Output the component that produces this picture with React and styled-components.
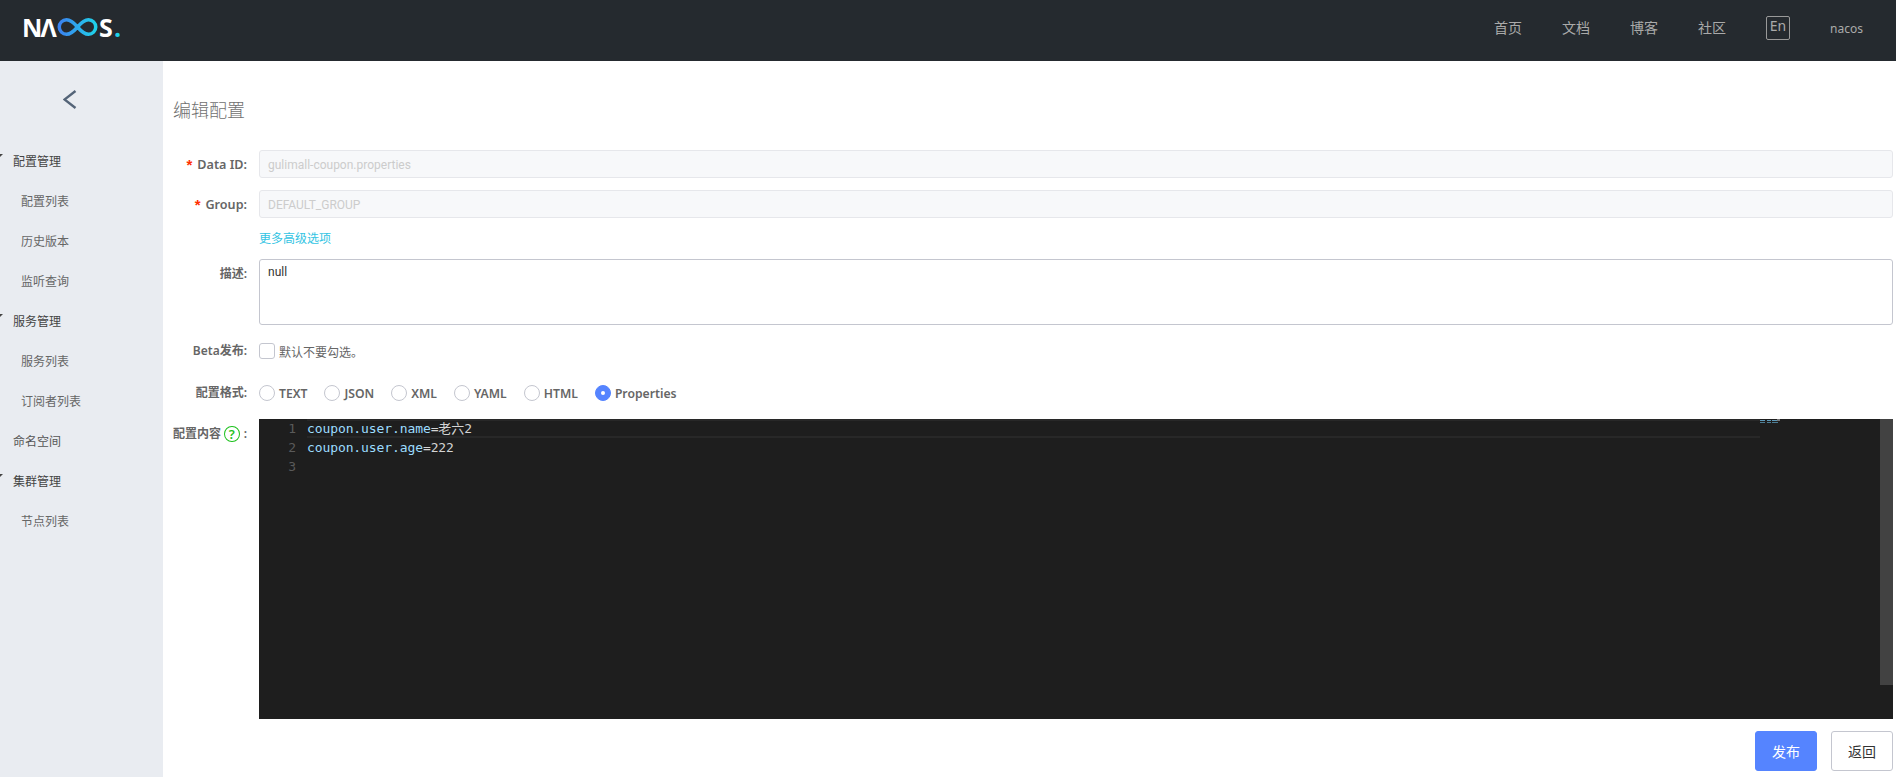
import React from 'react';
import styled, { createGlobalStyle } from 'styled-components';

const Global = createGlobalStyle`
  html, body { margin: 0; padding: 0; background: #fff; }
  body { font-family: "Noto Sans", "Noto Sans CJK SC", sans-serif; font-size: 12px; color: #333; }
  * { box-sizing: border-box; }
`;

const Page = styled.div`
  width: 1896px; height: 777px; display: flex; flex-direction: column; overflow: hidden;
`;
const Header = styled.header`
  height: 61px; flex: none; background: #252a2f; display: flex; align-items: center;
  justify-content: space-between; padding: 0 33px 0 22px;
`;
const Logo = styled.div`
  display: flex; align-items: center; height: 18px; margin-top: -7px; color: #fff;
  font-family: "Open Sans", sans-serif; font-weight: 700; font-size: 25px; line-height: 18px;
`;
const LogoLetter = styled.span`
  display: block; width: ${p => p.$w}px; text-align: center; color: ${p => p.$c || '#fff'};
`;
const Nav = styled.nav`
  display: flex; align-items: center; gap: 40px; color: #aaa; font-size: 14px; margin-top: -5px;
`;
const NavLink = styled.a`
  color: #aaa; font-family: "Noto Sans CJK SC", sans-serif; margin-bottom: 2px;
`;
const LangBox = styled.span`
  width: 24px; height: 24px; border: 1px solid #999; border-radius: 2px; color: #aaa;
  display: flex; align-items: flex-start; justify-content: center; line-height: 18px; font-size: 14px;
`;
const UserName = styled.span`
  color: #aaa; font-size: 12px; width: 33px; white-space: nowrap;
`;
const Body = styled.div`
  flex: 1; display: flex; min-height: 0;
`;
const Sidebar = styled.aside`
  width: 163px; flex: none; background: #e9ecf1; overflow: hidden; padding-top: 29px;
`;
const Back = styled.div`
  display: flex; justify-content: center; width: 140px; height: 19px; margin-bottom: 31px;
`;
const Menu = styled.ul`
  list-style: none; margin: 0; padding: 0;
`;
const MenuItem = styled.li`
  height: 40px; display: flex; align-items: center; font-size: 12px;
  padding-left: ${p => (p.$sub ? 21 : 13)}px;
  color: ${p => (p.$sub ? '#666' : p.$group ? '#444' : '#555')};
  font-family: "Noto Sans CJK SC", sans-serif;
`;
const Caret = styled.i`
  display: block; width: 0; height: 0; margin: -8px 10px 0 -18px;
  border-left: 4px solid transparent; border-right: 4px solid transparent; border-top: 4px solid #444;
  flex: none;
`;
const Main = styled.main`
  flex: 1; min-width: 0; padding: 34px 3px 0 10px; background: #fff;
`;
const Title = styled.h1`
  margin: 0 0 27px; font-size: 18px; line-height: 28px; font-weight: 300; color: #707070;
  font-family: "Noto Sans CJK SC", sans-serif;
`;
const Row = styled.div`
  display: grid; grid-template-columns: 74px 1fr; column-gap: 12px; margin-bottom: ${p => p.$mb ?? 12}px;
  align-items: ${p => p.$center ? 'center' : 'start'};
`;
const Label = styled.label`
  display: flex; justify-content: flex-end; align-items: center; white-space: nowrap;
  height: ${p => p.$lh ?? 28}px; padding-top: ${p => (p.$lh ? 0 : 2)}px; line-height: 16px;
  font-size: 12px; font-weight: 600; color: #666;
  font-family: "Noto Sans", "Noto Sans CJK SC", sans-serif;
`;
const LatinText = styled.span`
  font-size: 12.6px;
`;
const Star = styled.span`
  color: #ff3000; margin-right: 5px; font-family: "Liberation Sans", sans-serif; font-size: 15px; line-height: 12px;
`;
const DisabledInput = styled.div`
  height: 28px; background: #f7f8fa; border: 1px solid #e6e7eb; border-radius: 3px; color: #ccc;
  padding: 0 8px; line-height: 28px; font-size: 12px; font-family: Roboto, sans-serif;
`;
const MoreLink = styled.a`
  display: block; color: #33c4e3; font-size: 12px; line-height: 20px;
  font-family: "Noto Sans CJK SC", sans-serif;
`;
const TextArea = styled.div`
  height: 66px; border: 1px solid #c4c6cf; border-radius: 3px; padding: 3px 8px; line-height: 18px;
  font-size: 12px; color: #333; font-family: Roboto, sans-serif;
`;
const CheckRow = styled.div`
  display: flex; align-items: center; height: 16px; gap: 4px; color: #666; font-size: 12px;
  font-family: "Noto Sans CJK SC", sans-serif;
`;
const CheckBox = styled.span`
  width: 16px; height: 16px; border: 1px solid #c4c6cf; border-radius: 3px; background: #fff; display: block;
`;
const RadioGroup = styled.div`
  display: flex; align-items: center; height: 16px; gap: 17px;
`;
const RadioItem = styled.span`
  display: flex; align-items: center; gap: 4px; font-weight: 600; font-size: 12.2px; color: #666;
`;
const Radio = styled.span`
  width: 16px; height: 16px; border-radius: 50%; flex: none; display: flex; align-items: center; justify-content: center;
  border: 1px solid ${p => (p.$on ? '#5584ff' : '#c4c6cf')};
  background: ${p => (p.$on ? '#5584ff' : '#fff')};
  &::after { content: ""; display: ${p => (p.$on ? 'block' : 'none')}; width: 4px; height: 4px; border-radius: 50%; background: #fff; }
`;
const Help = styled.span`
  width: 16px; height: 16px; border-radius: 50%; border: 1.5px solid #1dc11d; color: #1dc11d;
  display: inline-flex; align-items: center; justify-content: center; font-size: 13px; line-height: 1;
  font-weight: 600; margin: 0 4px 0 3px;
`;
const Editor = styled.div`
  height: 300px; background: #1e1e1e; display: flex; overflow: hidden;
  font-family: "DejaVu Sans Mono", "Noto Sans CJK SC", monospace; font-size: 13px; line-height: 19px;
  letter-spacing: -0.1px;
`;
const Gutter = styled.div`
  width: 48px; flex: none; text-align: right; padding-right: 11px; color: #5a5a5a;
`;
const LineNo = styled.div`
  height: 19px;
`;
const Code = styled.div`
  flex: 1; min-width: 0;
`;
const Line = styled.div`
  height: 19px; color: #d4d4d4; white-space: pre;
  ${p => p.$active && 'box-shadow: inset 0 2px 0 #282828, inset 0 -2px 0 #282828;'}
`;
const Key = styled.span`
  color: #9cdcfe;
`;
const Minimap = styled.div`
  width: 120px; flex: none; line-height: 0;
`;
const Scrollbar = styled.div`
  width: 13px; height: 266px; flex: none; background: #424242;
`;
const Actions = styled.div`
  display: flex; justify-content: flex-end; gap: 14px; margin-top: 12px;
`;
const Button = styled.button`
  width: 62px; height: 40px; border-radius: 3px; font-size: 14px; padding: 0;
  font-family: "Noto Sans CJK SC", sans-serif;
  background: ${p => (p.$primary ? '#5584ff' : '#fff')};
  color: ${p => (p.$primary ? '#fff' : '#333')};
  border: 1px solid ${p => (p.$primary ? '#5584ff' : '#c4c6cf')};
`;

const InfinityMark = () => (
  <svg width="41" height="18" viewBox="0 0 41 18" fill="none">
    <defs>
      <linearGradient id="inf" x1="0" x2="1" y1="0" y2="0">
        <stop offset="0" stopColor="#3b82f0" />
        <stop offset="1" stopColor="#1fd2ea" />
      </linearGradient>
    </defs>
    <path d="M20.5 9C16 3.700 13 1.750 9.500 1.750a7.250 7.250 0 0 0 0 14.500c3.500 0 6.500-1.950 11-7.250s7.500-7.250 11-7.250a7.250 7.250 0 0 1 0 14.500c-3.500 0-6.500-1.950-11-7.250Z"
      stroke="url(#inf)" strokeWidth="3.500" />
  </svg>
);

const menu = [
  { t: '配置管理', group: true }, { t: '配置列表', sub: true }, { t: '历史版本', sub: true }, { t: '监听查询', sub: true },
  { t: '服务管理', group: true }, { t: '服务列表', sub: true }, { t: '订阅者列表', sub: true },
  { t: '命名空间' }, { t: '集群管理', group: true }, { t: '节点列表', sub: true },
];
const formats = ['TEXT', 'JSON', 'XML', 'YAML', 'HTML', 'Properties'];

export default function App() {
  return (
    <Page>
      <Global />
      <Header>
        <Logo>
          <LogoLetter $w={18}>N</LogoLetter>
          <LogoLetter $w={17}>Λ</LogoLetter>
          <InfinityMark />
          <LogoLetter $w={16}>S</LogoLetter>
          <LogoLetter $w={5} $c="#1fd2ea">.</LogoLetter>
        </Logo>
        <Nav>
          <NavLink>首页</NavLink>
          <NavLink>文档</NavLink>
          <NavLink>博客</NavLink>
          <NavLink>社区</NavLink>
          <LangBox>En</LangBox>
          <UserName>nacos</UserName>
        </Nav>
      </Header>
      <Body>
        <Sidebar>
          <Back>
            <svg width="14" height="19" viewBox="0 0 14 19" fill="none">
              <path d="M12.500 1 L1.500 9.500 L12.500 18" stroke="#546478" strokeWidth="2.400" />
            </svg>
          </Back>
          <Menu>
            {menu.map(m => (
              <MenuItem key={m.t} $sub={m.sub} $group={m.group}>
                {m.group && <Caret />}
                {m.t}
              </MenuItem>
            ))}
          </Menu>
        </Sidebar>
        <Main>
          <Title>编辑配置</Title>
          <Row>
            <Label><Star>*</Star><LatinText>Data ID:</LatinText></Label>
            <DisabledInput>gulimall-coupon.properties</DisabledInput>
          </Row>
          <Row $mb={10}>
            <Label><Star>*</Star><LatinText>Group:</LatinText></Label>
            <DisabledInput>DEFAULT_GROUP</DisabledInput>
          </Row>
          <Row $mb={11}>
            <span />
            <MoreLink>更多高级选项</MoreLink>
          </Row>
          <Row $mb={18}>
            <Label>描述:</Label>
            <TextArea>null</TextArea>
          </Row>
          <Row $mb={26} $center>
            <Label $lh={16}>Beta发布:</Label>
            <CheckRow><CheckBox />默认不要勾选。</CheckRow>
          </Row>
          <Row $mb={18} $center>
            <Label $lh={16}>配置格式:</Label>
            <RadioGroup>
              {formats.map(f => (
                <RadioItem key={f}><Radio $on={f === 'Properties'} />{f}</RadioItem>
              ))}
            </RadioGroup>
          </Row>
          <Row $mb={0}>
            <Label>配置内容<Help>?</Help>:</Label>
            <Editor>
              <Gutter>
                <LineNo>1</LineNo>
                <LineNo>2</LineNo>
                <LineNo>3</LineNo>
              </Gutter>
              <Code>
                <Line $active><Key>coupon.user.name</Key>=老六2</Line>
                <Line><Key>coupon.user.age</Key>=222</Line>
                <Line />
              </Code>
              <Minimap>
                <svg width="20" height="4" viewBox="0 0 20 4">
                  <rect x="0" y="1" width="5" height="1" fill="#5f9ab8" />
                  <rect x="7" y="1" width="4" height="1" fill="#5f9ab8" />
                  <rect x="12" y="1" width="5" height="1" fill="#5f9ab8" />
                  <rect x="17" y="0" width="3" height="2" fill="#777" />
                  <rect x="0" y="3" width="5" height="1" fill="#4d7d95" />
                  <rect x="7" y="3" width="4" height="1" fill="#4d7d95" />
                  <rect x="12" y="3" width="6" height="1" fill="#4d7d95" />
                </svg>
              </Minimap>
              <Scrollbar />
            </Editor>
          </Row>
          <Actions>
            <Button $primary>发布</Button>
            <Button>返回</Button>
          </Actions>
        </Main>
      </Body>
    </Page>
  );
}
